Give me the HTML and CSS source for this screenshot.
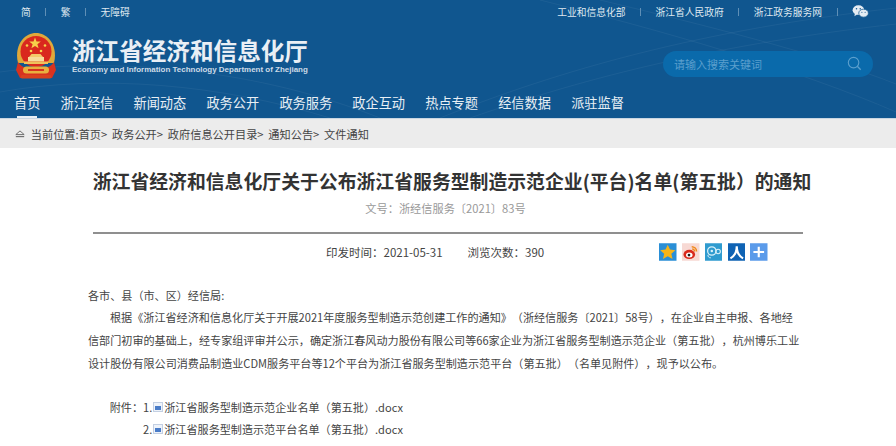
FILE: index.html
```html
<!DOCTYPE html>
<html lang="zh-CN">
<head>
<meta charset="utf-8">
<title>浙江省经济和信息化厅</title>
<link rel="stylesheet" href="styles.css">
</head>
<body>
<header class="header">
  <svg class="waves" viewBox="0 0 896 118" preserveAspectRatio="none" aria-hidden="true">
    <g fill="none" stroke="#fff" stroke-opacity=".05">
      <path d="M440 118C560 70 700 30 896 8"/>
      <path d="M470 118C590 76 720 44 896 24"/>
      <path d="M540 0C660 30 800 70 896 112"/>
      <path d="M600 0C700 24 820 54 896 84"/>
      <path d="M0 92C100 74 220 84 330 118"/>
      <path d="M0 72C120 56 260 70 380 118"/>
    </g>
  </svg>
  <div class="topbar">
    <div class="lang">
      <a>简</a><i class="sep"></i><a>繁</a><i class="sep"></i><a>无障碍</a>
    </div>
    <div class="links">
      <a>工业和信息化部</a><i class="sep"></i><a>浙江省人民政府</a><i class="sep"></i><a>浙江政务服务网</a><i class="sep"></i>
      <svg class="wechat" viewBox="0 0 18 14">
        <ellipse cx="6.8" cy="5.6" rx="6.3" ry="5.2" fill="#e4ecf3"/>
        <path d="M3 9l-.6 3 3-1.800z" fill="#e4ecf3"/>
        <ellipse cx="12.300" cy="8.800" rx="5.200" ry="4.300" fill="#e4ecf3" stroke="#10568f" stroke-width=".8"/>
        <circle cx="4.700" cy="4" r=".8" fill="#10568f"/><circle cx="8.700" cy="4" r=".8" fill="#10568f"/>
        <circle cx="10.500" cy="7.800" r=".6" fill="#10568f"/><circle cx="14" cy="7.800" r=".6" fill="#10568f"/>
      </svg>
    </div>
  </div>
  <div class="brand">
    <div class="logo">
      <svg class="emblem" viewBox="0 0 42 46">
        <path d="M3 30C-1 14 8 0 21 0s22 14 18 30z" fill="#e0a83a"/>
        <circle cx="21" cy="18.500" r="15.500" fill="#d9281e"/>
        <polygon points="20,4.500 21.500,8.500 25.800,8.600 22.400,11.200 23.600,15.300 20,12.900 16.400,15.300 17.600,11.200 14.200,8.600 18.500,8.500" fill="#f6d04a"/>
        <circle cx="12" cy="12.500" r="1.300" fill="#f6d04a"/><circle cx="16" cy="18" r="1.300" fill="#f6d04a"/>
        <circle cx="26" cy="18" r="1.300" fill="#f6d04a"/><circle cx="30" cy="12.500" r="1.300" fill="#f6d04a"/>
        <path d="M14 24l2.500-3h9l2.500 3z" fill="#f3c96a"/>
        <rect x="13" y="24" width="16" height="4.500" fill="#f7dc9a"/>
        <rect x="9" y="28.500" width="24" height="2.500" fill="#efc15a"/>
        <path d="M3 29c3 5 9 7 18 7s15-2 18-7l2 8-4 8H5l-4-8z" fill="#d8321f"/>
        <rect x="8" y="33.500" width="26" height="7" rx="3.500" fill="#e8b03f"/>
        <rect x="13" y="36" width="16" height="2" fill="#d8321f"/>
        <rect x="6" y="42" width="30" height="3.500" rx="1" fill="#d8421f"/>
      </svg>
      <div class="logo-text">
        <div class="logo-cn">浙江省经济和信息化厅</div>
        <div class="logo-en">Economy and Information Technology Department of Zhejiang</div>
      </div>
    </div>
    <div class="search">
      <span class="search-text">请输入搜索关键词</span>
      <svg class="search-icon" viewBox="0 0 16 16">
        <circle cx="7" cy="7" r="5.600" fill="none" stroke="#5b9fcd" stroke-width="1.200"/>
        <path d="M11 11l3.600 3.600" stroke="#5b9fcd" stroke-width="1.400"/>
      </svg>
    </div>
  </div>
  <nav class="nav">
    <a class="active">首页</a><a>浙江经信</a><a>新闻动态</a><a>政务公开</a><a>政务服务</a><a>政企互动</a><a>热点专题</a><a>经信数据</a><a>派驻监督</a>
  </nav>
</header>
<div class="crumbs">
  <svg class="home" viewBox="0 0 12 9">
    <path d="M6 .8L1 5.200h10z" fill="none" stroke="#666" stroke-width="1.100"/>
    <rect x="1" y="7" width="10" height="1.300" fill="#666"/>
  </svg>
  <span>当前位置:首页&gt;</span><span>政务公开&gt;</span><span>政府信息公开目录&gt;</span><span>通知公告&gt;</span><span>文件通知</span>
</div>
<main class="article">
  <h1 class="title">浙江省经济和信息化厅关于公布浙江省服务型制造示范企业(平台)名单(第五批）的通知</h1>
  <div class="docno">文号：浙经信服务〔2021〕83号</div>
  <div class="meta">
    <div class="meta-text"><span>印发时间：2021-05-31</span><span>浏览次数：390</span></div>
    <div class="share">
      <svg class="ico" viewBox="0 0 18 18"><rect width="18" height="18" fill="#2a8fd6"/><polygon points="9,1.500 11.300,6.500 16.800,7.100 12.700,10.800 13.900,16.200 9,13.400 4.100,16.200 5.300,10.800 1.200,7.100 6.700,6.500" fill="#f6b417"/></svg>
      <svg class="ico" viewBox="0 0 18 18"><rect width="18" height="18" fill="#f7d9d4"/><ellipse cx="7.500" cy="11.500" rx="6" ry="4.800" fill="#d9291c"/><ellipse cx="7.500" cy="12" rx="3.400" ry="2.600" fill="#fff"/><circle cx="7.200" cy="12.200" r="1.400" fill="#222"/><path d="M10 3.500a5 5 0 0 1 5 5M10.500 6a2.500 2.500 0 0 1 2.500 2.500" fill="none" stroke="#f08a1d" stroke-width="1.500"/></svg>
      <svg class="ico" viewBox="0 0 18 18"><rect width="18" height="18" fill="#2f9bcf"/><circle cx="7" cy="8" r="4.300" fill="none" stroke="#d9f1fa" stroke-width="1.300"/><circle cx="7" cy="8" r="1.300" fill="#d9f1fa"/><circle cx="13.500" cy="8.500" r="2.300" fill="none" stroke="#d9f1fa" stroke-width="1.100"/><path d="M3 12c0 2 1 3 3 3" fill="none" stroke="#d9f1fa"/></svg>
      <svg class="ico" viewBox="0 0 18 18"><rect width="18" height="18" fill="#0f63b4"/><path d="M9 3C9 9 7 13 2.500 15.500M9 3c0 6 2 10 6.500 12.500" fill="none" stroke="#fff" stroke-width="2.200"/></svg>
      <svg class="ico" viewBox="0 0 18 18"><rect width="18" height="18" fill="#5b9bea"/><path d="M9 3.500v11M3.500 9h11" stroke="#fff" stroke-width="2.200"/></svg>
    </div>
  </div>
  <div class="body">
    <p class="salute">各市、县（市、区）经信局:</p>
    <p class="para">根据《浙江省经济和信息化厅关于开展2021年度服务型制造示范创建工作的通知》（浙经信服务〔2021〕58号），在企业自主申报、各地经信部门初审的基础上，经专家组评审并公示，确定浙江春风动力股份有限公司等66家企业为浙江省服务型制造示范企业（第五批），杭州博乐工业设计股份有限公司消费品制造业CDM服务平台等12个平台为浙江省服务型制造示范平台（第五批）（名单见附件），现予以公布。</p>
    <div class="attach">
      <div class="attach-row"><span class="attach-label">附件：</span><span>1.</span><svg class="doc" viewBox="0 0 10 10"><rect x=".5" y=".5" width="9" height="9" fill="#eef3fa" stroke="#c3cfe2"/><rect x="2" y="4" width="6" height="4" fill="#4a7cc8"/></svg><span>浙江省服务型制造示范企业名单（第五批）.docx</span></div>
      <div class="attach-row"><span class="attach-label"></span><span>2.</span><svg class="doc" viewBox="0 0 10 10"><rect x=".5" y=".5" width="9" height="9" fill="#eef3fa" stroke="#c3cfe2"/><rect x="2" y="4" width="6" height="4" fill="#4a7cc8"/></svg><span>浙江省服务型制造示范平台名单（第五批）.docx</span></div>
    </div>
  </div>
</main>
</body>
</html>
```
FILE: styles.css
```css
* { box-sizing: border-box; }
html, body { margin: 0; padding: 0; }
body {
  width: 896px;
  height: 446px;
  overflow: hidden;
  background: #fff;
  font-family: "Noto Sans CJK SC", "Noto Sans", sans-serif;
  color: #333;
  text-spacing-trim: space-all;
}
.header { position: relative; height: 119px; background: #10568f; border-bottom: 1px solid #c9d6e2; }
.waves { position: absolute; inset: 0; width: 100%; height: 118px; pointer-events: none; }
.topbar {
  position: relative;
  height: 25px;
  display: flex;
  justify-content: space-between;
  align-items: center;
  padding: 0 27px 2px 21px;
  font-size: 9.750px;
  color: #dfe8f0;
}
.lang, .links { display: flex; align-items: center; }
.sep { display: block; width: 1px; height: 8px; background: #5f8fb6; margin: 0 14.500px; }
.wechat { width: 17px; height: 13px; }
.brand {
  position: relative;
  height: 58px;
  display: flex;
  justify-content: space-between;
  align-items: center;
  padding: 2px 23px 0 15px;
}
.logo { display: flex; align-items: center; padding-top: 2px; }
.emblem { width: 42px; height: 46px; margin-right: 15px; }
.logo-cn { font-size: 23.600px; font-weight: 700; line-height: 28px; color: #e9eff5; white-space: nowrap; }
.logo-en { font-family: "Liberation Sans", sans-serif; font-size: 7.970px; font-weight: 700; line-height: 12px; color: #cddbe7; white-space: nowrap; }
.search {
  width: 210px;
  height: 26px;
  margin-top: 17px;
  border-radius: 13px;
  background: #0a6aab;
  display: flex;
  justify-content: space-between;
  align-items: center;
  padding: 0 11px;
  font-size: 11px;
  color: #5b9fcd;
}
.search-icon { width: 15px; height: 15px; }
.nav { position: relative; height: 35px; display: flex; gap: 20.200px; padding-left: 14px; }
.nav a { position: relative; font-size: 13.200px; line-height: 31px; padding-top: 4px; color: #e8eff5; white-space: nowrap; }
.nav .active::after {
  content: "";
  position: absolute;
  left: 3px;
  right: 3px;
  bottom: 0;
  height: 2px;
  background: #e8eff5;
}
.crumbs {
  height: 29px;
  background: #ececec;
  display: flex;
  align-items: center;
  gap: 4.800px;
  padding-left: 15px;
  font-size: 11.200px;
  color: #444;
}
.home { width: 10px; height: 8px; margin-right: 1px; }
.article { width: 710px; margin: 0 0 0 93px; }
.title { margin: 20px 0 0 -6px; width: 730px; font-size: 18.850px; line-height: 25px; font-weight: 700; text-align: center; white-space: nowrap; color: #333; }
.docno { margin-top: 7px; padding-right: 5px; font-size: 11.200px; line-height: 17px; text-align: center; color: #999; }
.meta { margin-top: 15px; height: 35px; border-top: 2px solid #8f8f8f; display: flex; align-items: center; padding-top: 2px; font-size: 11.500px; color: #444; }
.meta-text { display: flex; gap: 25px; margin-left: 233px; }
.share { display: flex; gap: 5.300px; margin-left: 115px; }
.ico { width: 17.500px; height: 18px; display: block; }
.body { margin-left: -5px; font-size: 11.100px; line-height: 22px; color: #444; }
.salute { margin: 17px 0 0; }
.para { margin: 0; text-indent: 22px; line-height: 23px; }
.attach { margin-top: 21px; }
.attach-row { display: flex; align-items: center; height: 22px; white-space: nowrap; }
.attach-label { width: 55px; text-align: right; }
.doc { width: 10px; height: 10px; margin: 0 1px; }
```
